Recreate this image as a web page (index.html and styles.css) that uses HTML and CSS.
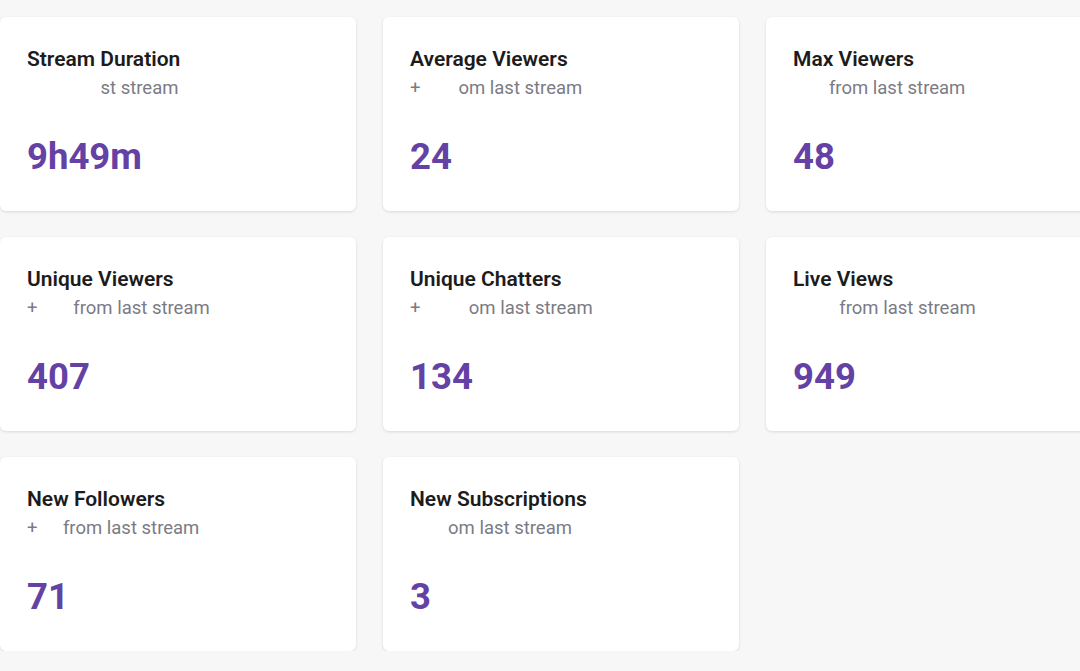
FILE: index.html
```html
<!DOCTYPE html>
<html lang="en">

<head>
    <meta charset="UTF-8">
    <meta name="viewport" content="width=device-width, initial-scale=1.0">
    <title>Stream Stats</title>
    <link rel="stylesheet" href="styles.css">
</head>

<body>
    <!-- stat cards -->
    <div id="stats-grid">
        <div class="stat-card">
            <div class="stat-title">Stream Duration</div>
            <div class="stat-change"><span class="masked">1 from la</span>st stream</div>
            <div class="stat-value">9h49m</div>
        </div>
        <div class="stat-card">
            <div class="stat-title">Average Viewers</div>
            <div class="stat-change">+<span class="masked">12 fr</span>om last stream</div>
            <div class="stat-value">24</div>
        </div>
        <div class="stat-card">
            <div class="stat-title">Max Viewers</div>
            <div class="stat-change"><span class="masked">+12 </span>from last stream</div>
            <div class="stat-value">48</div>
        </div>

        <div class="stat-card">
            <div class="stat-title">Unique Viewers</div>
            <div class="stat-change">+<span class="masked">162 </span>from last stream</div>
            <div class="stat-value">407</div>
        </div>
        <div class="stat-card">
            <div class="stat-title">Unique Chatters</div>
            <div class="stat-change">+<span class="masked">108 fr</span>om last stream</div>
            <div class="stat-value">134</div>
        </div>
        <div class="stat-card">
            <div class="stat-title">Live Views</div>
            <div class="stat-change"><span class="masked">+162 </span>from last stream</div>
            <div class="stat-value">949</div>
        </div>

        <div class="stat-card">
            <div class="stat-title">New Followers</div>
            <div class="stat-change">+<span class="masked">17 </span>from last stream</div>
            <div class="stat-value">71</div>
        </div>
        <div class="stat-card">
            <div class="stat-title">New Subscriptions</div>
            <div class="stat-change"><span class="masked">+1 fr</span>om last stream</div>
            <div class="stat-value">3</div>
        </div>
    </div>
</body>

</html>
```

FILE: styles.css
```css
/* page */
body {
    margin: 0;
    padding: 0;
    background-color: #f7f7f7;
    font-family: Roboto, "Liberation Sans", Arial, sans-serif;
    overflow: hidden;
}

/* grid of cards */
#stats-grid {
    display: grid;
    grid-template-columns: repeat(3, 356px);
    column-gap: 27px;
    row-gap: 26px;
    padding-top: 17px;
    width: 1200px;
}

.stat-card {
    background-color: #ffffff;
    border-radius: 6px;
    box-shadow: 0 1px 3px rgba(0, 0, 0, 0.12);
    padding: 30px 26px 32px 27px;
}

.stat-title {
    font-size: 21px;
    line-height: 24px;
    font-weight: 600;
    color: #1c1c1c;
}

.stat-change {
    margin-top: 5px;
    font-size: 18.5px;
    line-height: 24px;
    color: #7b7b85;
}

/* hidden part of the text */
.masked {
    color: transparent;
}

.stat-value {
    margin-top: 35px;
    font-size: 36.5px;
    line-height: 44px;
    font-weight: 700;
    color: #6441a5;
}
```
